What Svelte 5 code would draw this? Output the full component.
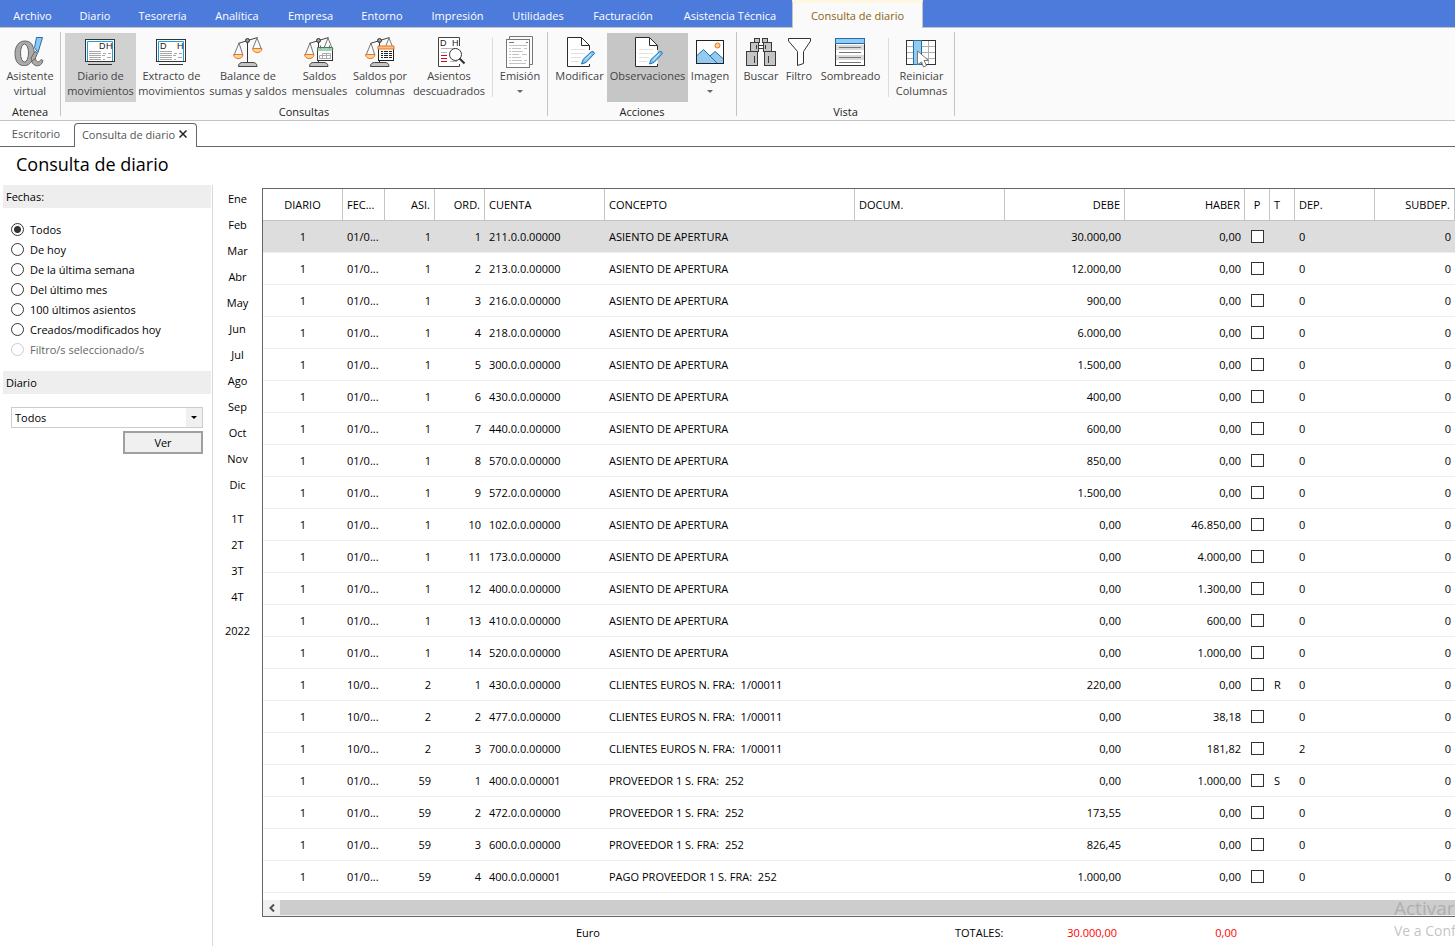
<script>
  const menu = [
    ['Archivo', 65], ['Diario', 60], ['Tesorería', 75], ['Analítica', 74], ['Empresa', 73],
    ['Entorno', 70], ['Impresión', 81], ['Utilidades', 80], ['Facturación', 90],
    ['Asistencia Técnica', 124], ['Consulta de diario', 131]
  ];

  const groups = [
    { name: 'Atenea', flush: true, items: [{ icon: 'alpha', lines: ['Asistente', 'virtual'], w: 60 }] },
    {
      name: 'Consultas',
      items: [
        { icon: 'diario', lines: ['Diario de', 'movimientos'], w: 71, state: 'checked' },
        { icon: 'extracto', lines: ['Extracto de', 'movimientos'], w: 71 },
        { icon: 'scales', lines: ['Balance de', 'sumas y saldos'], w: 82 },
        { icon: 'scalesCal', lines: ['Saldos', 'mensuales'], w: 61 },
        { icon: 'scalesCol', lines: ['Saldos por', 'columnas'], w: 60 },
        { icon: 'asientos', lines: ['Asientos', 'descuadrados'], w: 78 },
        { sep: true },
        { icon: 'emision', lines: ['Emisión'], w: 46, drop: true }
      ]
    },
    {
      name: 'Acciones',
      items: [
        { icon: 'edit', lines: ['Modificar'], w: 55 },
        { icon: 'edit', lines: ['Observaciones'], w: 81, state: 'hot' },
        { icon: 'imagen', lines: ['Imagen'], w: 44, drop: true }
      ]
    },
    {
      name: 'Vista',
      items: [
        { icon: 'buscar', lines: ['Buscar'], w: 40 },
        { icon: 'filtro', lines: ['Filtro'], w: 36 },
        { icon: 'sombreado', lines: ['Sombreado'], w: 67 },
        { sep: true },
        { icon: 'reiniciar', lines: ['Reiniciar', 'Columnas'], w: 57 }
      ]
    }
  ];

  const ranges = [
    'Todos', 'De hoy', 'De la última semana', 'Del último mes', '100 últimos asientos',
    'Creados/modificados hoy', 'Filtro/s seleccionado/s'
  ];
  let range = $state('Todos');

  const periods = [
    ['Ene', 'Feb', 'Mar', 'Abr', 'May', 'Jun', 'Jul', 'Ago', 'Sep', 'Oct', 'Nov', 'Dic'],
    ['1T', '2T', '3T', '4T'],
    ['2022']
  ];

  const columns = [
    ['DIARIO', 'c', 80], ['FEC...', 'l', 42], ['ASI.', 'r', 50], ['ORD.', 'r', 50], ['CUENTA', 'l', 120],
    ['CONCEPTO', 'l', 0], ['DOCUM.', 'l', 150], ['DEBE', 'r', 120], ['HABER', 'r', 120],
    ['P', 'c', 25], ['T', 'l', 25], ['DEP.', 'l', 80], ['SUBDEP.', 'r', 80]
  ];

  const A = 'ASIENTO DE APERTURA';
  const C = 'CLIENTES EUROS N. FRA:  1/00011';
  const P = 'PROVEEDOR 1 S. FRA:  252';
  const rows = [
    ['01/0...', 1, 1, '211.0.0.00000', A, '30.000,00', '0,00', '', 0],
    ['01/0...', 1, 2, '213.0.0.00000', A, '12.000,00', '0,00', '', 0],
    ['01/0...', 1, 3, '216.0.0.00000', A, '900,00', '0,00', '', 0],
    ['01/0...', 1, 4, '218.0.0.00000', A, '6.000,00', '0,00', '', 0],
    ['01/0...', 1, 5, '300.0.0.00000', A, '1.500,00', '0,00', '', 0],
    ['01/0...', 1, 6, '430.0.0.00000', A, '400,00', '0,00', '', 0],
    ['01/0...', 1, 7, '440.0.0.00000', A, '600,00', '0,00', '', 0],
    ['01/0...', 1, 8, '570.0.0.00000', A, '850,00', '0,00', '', 0],
    ['01/0...', 1, 9, '572.0.0.00000', A, '1.500,00', '0,00', '', 0],
    ['01/0...', 1, 10, '102.0.0.00000', A, '0,00', '46.850,00', '', 0],
    ['01/0...', 1, 11, '173.0.0.00000', A, '0,00', '4.000,00', '', 0],
    ['01/0...', 1, 12, '400.0.0.00000', A, '0,00', '1.300,00', '', 0],
    ['01/0...', 1, 13, '410.0.0.00000', A, '0,00', '600,00', '', 0],
    ['01/0...', 1, 14, '520.0.0.00000', A, '0,00', '1.000,00', '', 0],
    ['10/0...', 2, 1, '430.0.0.00000', C, '220,00', '0,00', 'R', 0],
    ['10/0...', 2, 2, '477.0.0.00000', C, '0,00', '38,18', '', 0],
    ['10/0...', 2, 3, '700.0.0.00000', C, '0,00', '181,82', '', 2],
    ['01/0...', 59, 1, '400.0.0.00001', P, '0,00', '1.000,00', 'S', 0],
    ['01/0...', 59, 2, '472.0.0.00000', P, '173,55', '0,00', '', 0],
    ['01/0...', 59, 3, '600.0.0.00000', P, '826,45', '0,00', '', 0],
    ['01/0...', 59, 4, '400.0.0.00001', 'PAGO PROVEEDOR 1 S. FRA:  252', '1.000,00', '0,00', '', 0]
  ];
</script>

{#snippet monitor(left)}
  <rect x="1.5" y="3.5" width="29" height="22" fill="#fff" stroke="#333" />
  <path d="M3.5 25V5.5H28.5V25" fill="none" stroke="#1e9fd6" />
  <path d="M4 28.5H28" stroke="#333" />
  <text x={left ? 5 : 15} y="13" class="glyph">D</text>
  <text x="22" y="13" class="glyph">H</text>
  <path d="M5 15.5H17M5 17.5H17M5 19.5H17M5 21.5H17M5 23.5H17M19 17.5H22M24 17.5H27M18 19.5H21M23 21.5H27M19 23.5H21" stroke="#a8a8a8" />
{/snippet}

{#snippet scales()}
  <path d="M15.5 6V26" stroke="#333" />
  <path d="M6 7.5L25.500 1.500" stroke="#444" fill="none" />
  <path d="M7 7L2.500 18M7 7L10.500 18M25 2L21 12M25 2L29 12" stroke="#777" fill="none" />
  <circle cx="15.500" cy="4.500" r="2" fill="#999" stroke="#333" />
  <path d="M1.500 18.500H11C10.500 24 2 24 1.500 18.500Z" fill="#ffd391" stroke="#e2762a" />
  <path d="M20.500 12.500H30C29.500 18 21 18 20.500 12.500Z" fill="#ffd391" stroke="#e2762a" />
  <path d="M6.500 30.500C6.500 27.500 8.500 26.500 10.500 26.500H21C23 26.500 25 27.500 25 30.500Z" fill="#c4c4c4" stroke="#444" />
{/snippet}

{#snippet icon(name)}
  <svg class="icon" viewBox="0 0 32 32" width="32" height="32" aria-hidden="true">
    {#if name === 'alpha'}
      <path d="M11 5C21 5 19.500 16 21.500 23C22.500 27 25.500 26.500 27 23.500L29 24.500C27.500 32 19 31 17.500 25C15 30 11.500 29.500 9.500 29.500C3.500 29.500 1 24 1 17.500C1 10 5 5 11 5Z" fill="#aaa" stroke="#666" />
      <path d="M21 15.500L23.500 17L21 23L18 25L17 22Z" fill="#aaa" stroke="#666" />
      <ellipse cx="10.500" cy="17" rx="4" ry="9" fill="#fafafa" stroke="#666" />
      <path d="M22.500 1.500H28.500L24 16.500L20.500 11.500Z" fill="#8cc8f0" stroke="#1f6fb0" />
    {:else if name === 'diario'}
      {@render monitor(false)}
    {:else if name === 'extracto'}
      {@render monitor(true)}
    {:else if name === 'scales'}
      {@render scales()}
    {:else if name === 'scalesCal'}
      {@render scales()}
      <rect x="14.500" y="12.500" width="15" height="12" fill="#fff" stroke="#333" />
      <path d="M14 11.500H30V15H14Z" fill="#9fd3b4" />
      <path d="M14.500 15V11.500H29.500V15M17.500 9.500V12.500M26.500 9.500V12.500" stroke="#4a7a5c" fill="none" />
      <path d="M19.500 17.500H27.500V22.500H16.500V19.500H27.500M19.500 17.500V22.500M23.500 17.500V22.500" stroke="#aaa" fill="none" />
    {:else if name === 'scalesCol'}
      {@render scales()}
      <rect x="14.500" y="10.500" width="15" height="14" fill="#fff" stroke="#222" />
      <path d="M14 10H30V13H14Z" fill="#ffc080" stroke="#e2762a" />
      <path d="M17 15.500H28M17 17.500H28M17 19.500H28M17 21.500H28" stroke="#222" stroke-dasharray="2 1 4 1 3 1" />
    {:else if name === 'asientos'}
      <path d="M26.500 10V1.500H5.500V30.500H26.500V28" fill="#fff" stroke="#444" />
      <text x="7" y="10" class="glyph">D</text>
      <text x="19" y="10" class="glyph">H</text>
      <path d="M8 12.500H24M8 16.500H14" stroke="#b4b4b4" />
      <path d="M8 19.500H14M8 22.500H14M8 25.500H14" stroke="#d9001b" stroke-width="1" />
      <path d="M17 25.500H24" stroke="#b4b4b4" />
      <circle cx="22.500" cy="18.500" r="6" fill="#fff" stroke="#333" />
      <path d="M26.500 22.500L31.500 27.500" stroke="#333" stroke-width="2" />
    {:else if name === 'emision'}
      <path d="M5.500 3V.5H28.500V28.500H26" fill="#fafafa" stroke="#777" />
      <rect x="2.500" y="3.500" width="23" height="28" fill="#fff" stroke="#777" />
      <path d="M5 6.500H10M22 6.500H24" stroke="#777" />
      <path d="M5 9.500H23M5 12.500H7M8 12.500H17M20 12.500H23M5 15.500H7M8 15.500H19M5 18.500H7M8 18.500H15M18 18.500H23M5 21.500H7M8 21.500H17M5 24.500H7M8 24.500H18M20 24.500H23M5 27.500H22" stroke="#c4c4c4" />
    {:else if name === 'edit'}
      <path d="M18 1.500H4.500V30.500H26.500V10Z" fill="#fff" />
      <path d="M26.500 14V10L18 1.500H4.500V30.500H26.500V28" fill="none" stroke="#2b2b2b" />
      <path d="M18.500 1.500V9.500H26.500Z" fill="#fff" stroke="#2b2b2b" />
      <path d="M8 13.500H22M8 17.500H22M8 21.500H18M8 25.500H16" stroke="#e2e2e2" />
      <path d="M18.500 28L20 23.500L28.500 15.500Q31 15 31.500 17.500L23 26.500Z" fill="#7cc0ee" stroke="#1a74b8" />
      <path d="M22 24.500L28 18" stroke="#e6f4ff" />
    {:else if name === 'imagen'}
      <rect x="2.500" y="4.500" width="27" height="23" fill="#fff" />
      <path d="M3 19.500L9.500 13.500L16 20L21 15.500L29 22.500V27H3Z" fill="#94c9f0" />
      <path d="M3 19.500L9.500 13.500L23 27M16 20L21 15.500L29 22.500" fill="none" stroke="#1f6fb0" />
      <circle cx="23.500" cy="9.500" r="2.500" fill="#ffd391" stroke="#e2762a" />
      <rect x="2.500" y="4.500" width="27" height="23" fill="none" stroke="#222" />
    {:else if name === 'buscar'}
      <g fill="#c4c4c4" stroke="#3a3a3a">
        <path d="M12 9.500H20V12.500H12Z" fill="#fff" />
        <rect x="9.500" y="2.500" width="5" height="4" />
        <rect x="17.500" y="2.500" width="5" height="4" />
        <rect x="5.500" y="6.500" width="8" height="9" />
        <rect x="18.500" y="6.500" width="8" height="9" />
        <rect x="1.500" y="15.500" width="11" height="14" />
        <rect x="19.500" y="15.500" width="11" height="14" />
        <path d="M9.500 20V27M23.500 20V27M11.500 9V13M20.500 9V13" />
      </g>
    {:else if name === 'filtro'}
      <path d="M5.500 2.500H27.500V5L20.500 15.500V27.500L14.500 29.500V15.500L5.500 5Z" fill="#fff" stroke="#333" />
    {:else if name === 'sombreado'}
      <rect x="1.500" y="2.500" width="29" height="27" fill="#fff" stroke="#333" />
      <path d="M2 9H30V14H2ZM2 19H30V24H2Z" fill="#dadada" />
      <rect x="1.500" y="2.500" width="29" height="5" fill="#94c9f0" stroke="#1f6fb0" />
      <path d="M5 11.500H27M5 16.500H27M5 21.500H27M5 26.500H27" stroke="#777" />
    {:else if name === 'reiniciar'}
      <rect x="1.500" y="4.500" width="29" height="24" fill="#fff" stroke="#333" />
      <path d="M2 10.500H30M2 16.500H30M2 22.500H30M23.500 5V28" stroke="#b0b0b0" />
      <rect x="8.500" y="4.500" width="8" height="24" fill="#94c9f0" stroke="#1f6fb0" />
      <path d="M12.500 15L23.500 24.500H19L21.500 29.500L18.500 31L16.500 26L12.500 28.500Z" fill="#fff" stroke="#777" />
    {/if}
  </svg>
{/snippet}

<div class="app">
  <nav class="menu">
    {#each menu as [label, w], i}
      <button class:active={i === menu.length - 1} style="width: {w}px">{label}</button>
    {/each}
  </nav>

  <header class="ribbon">
    {#each groups as g}
      <section class="group" class:flush={g.flush}>
        <div class="tools">
          {#each g.items as it}
            {#if it.sep}
              <span class="sep"></span>
            {:else}
              <button class="tool {it.state ?? ''}" style="width: {it.w}px">
                {@render icon(it.icon)}
                {#each it.lines as line}<span>{line}</span>{/each}
                {#if it.drop}<i class="caret"></i>{/if}
              </button>
            {/if}
          {/each}
        </div>
        <div class="caption">{g.name}</div>
      </section>
    {/each}
  </header>

  <div class="tabs">
    <button class="tab">Escritorio</button>
    <div class="tab current">
      <span>Consulta de diario</span>
      <button class="close" aria-label="Cerrar">
        <svg viewBox="0 0 8 8" width="8" height="8"><path d="M.5 .5L7.500 7.500M7.500 .5L.5 7.500" stroke="#222" stroke-width="1.500" /></svg>
      </button>
    </div>
  </div>

  <h1>Consulta de diario</h1>

  <div class="body">
    <aside>
      <h2>Fechas:</h2>
      <div class="radios">
        {#each ranges as r, i}
          <label class:off={i === 6}>
            <input type="radio" name="range" value={r} bind:group={range} disabled={i === 6} />{r}
          </label>
        {/each}
      </div>
      <h2>Diario</h2>
      <div class="pick">
        <div class="combo">
          <select aria-label="Diario"><option>Todos</option></select>
          <span class="drop"><i class="caret dark"></i></span>
        </div>
        <button class="go">Ver</button>
      </div>
    </aside>

    <nav class="periods">
      {#each periods as block}
        <div>
          {#each block as p}<button>{p}</button>{/each}
        </div>
      {/each}
    </nav>

    <main>
      <div class="grid">
        <table>
          <colgroup>
            {#each columns as [, , w]}<col style={w ? `width: ${w}px` : ''} />{/each}
          </colgroup>
          <thead>
            <tr>{#each columns as [name, align]}<th class={align}>{name}</th>{/each}</tr>
          </thead>
          <tbody>
            {#each rows as [date, asi, ord, acc, text, debe, haber, t, dep], i}
              <tr class:selected={i === 0}>
                <td class="c">1</td>
                <td>{date}</td>
                <td class="r">{asi}</td>
                <td class="r">{ord}</td>
                <td>{acc}</td>
                <td>{text}</td>
                <td></td>
                <td class="r">{debe}</td>
                <td class="r">{haber}</td>
                <td class="check"><input type="checkbox" aria-label="P" /></td>
                <td>{t}</td>
                <td>{dep}</td>
                <td class="r">0</td>
              </tr>
            {/each}
          </tbody>
        </table>
        <div class="scroll">
          <button aria-label="Desplazar a la izquierda">
            <svg viewBox="0 0 8 8" width="8" height="8"><path d="M6 .5L2.500 4L6 7.500" fill="none" stroke="#505050" stroke-width="2" /></svg>
          </button>
          <div class="thumb"></div>
        </div>
      </div>
      <footer>
        <span class="currency">Euro</span>
        <span>TOTALES:</span>
        <span class="sum">30.000,00</span>
        <span class="sum">0,00</span>
      </footer>
    </main>
  </div>

  <div class="watermark"><p>Activar</p><p class="small">Ve a Conf</p></div>
</div>

<style>
  :global(body) { background: #fff; }
  .app {
    position: relative;
    display: flex;
    flex-direction: column;
    min-height: 100vh;
    overflow: hidden;
    font: 11px/15px 'Open Sans', 'Noto Sans', sans-serif;
    color: #000;
  }
  .app * { box-sizing: border-box; }
  button { font: inherit; color: inherit; padding: 0; border: 0; background: none; white-space: nowrap; }

  .menu { display: flex; height: 28px; background: #4d7bdb; border-bottom: 1px solid #c4c4c4; }
  .menu button { flex: none; color: #fff; padding-top: 3px; }
  .menu .active {
    height: 28px;
    padding-top: 0;
    color: #8a6410;
    background: #fafafa;
    border: solid #c4c4c4;
    border-width: 1px 1px 0;
    border-top: 3px solid #fff8e0;
  }

  .ribbon { display: flex; height: 93px; padding-top: 4px; background: #fafafa; border-bottom: 1px solid #c4c4c4; }
  .group { height: 84px; padding: 1px 4px 0; border-right: 1px solid #c4c4c4; }
  .group.flush { padding: 1px 0 0; }
  .tools { display: flex; height: 69px; }
  .tool { display: flex; flex-direction: column; align-items: center; padding-top: 3px; color: #444; }
  .tool .icon { flex: none; margin-right: 1px; }
  .tool.checked { background: #d1d1d1; }
  .tool.hot { background: #c6c6c6; }
  .glyph { font: 9px 'Liberation Sans', sans-serif; fill: #222; }
  .caret { border: 3px solid transparent; border-top-color: #666; border-bottom: 0; margin-top: 7px; }
  .caret.dark { border-top-color: #000; margin: 0; }
  .sep { width: 1px; height: 59px; margin: 5px 4px 0; background: #dcdcdc; }
  .caption { margin-top: 2px; text-align: center; color: #222; }

  .tabs { display: flex; align-items: flex-end; height: 26px; border-bottom: 1px solid #666; }
  .tab { height: 24px; width: 74px; padding: 0 2px 2px 0; color: #555; }
  .tab.current {
    display: flex;
    align-items: center;
    justify-content: center;
    gap: 4px;
    width: 123px;
    padding: 0 2px 3px 0;
    margin-bottom: -1px;
    background: #fff;
    border: 1px solid #666;
    border-bottom: 0;
    border-radius: 4px 4px 0 0;
  }
  .close { display: flex; }

  h1 { margin: 0; padding: 5px 16px 8px; font-size: 18px; line-height: 25px; font-weight: 400; }

  .body { display: flex; flex: 1; }
  aside { flex: none; width: 213px; padding: 0 1px 0 3px; border-right: 1px solid #d8d8d8; }
  h2 { margin: 0; padding: 4px 3px; font-size: 11px; line-height: 15px; font-weight: 400; background: #eee; }
  .radios { padding: 11px 8px 12px; }
  .radios label { display: flex; align-items: center; gap: 6px; height: 20px; }
  .radios .off { color: #666; }
  input { appearance: none; flex: none; width: 13px; height: 13px; margin: 0; background: #fff; border: 1px solid #333; }
  input[type='radio'] { border-radius: 50%; }
  input[type='radio']:checked { background: radial-gradient(circle, #333 3px, #fff 4px); }
  input:disabled { border-color: #ccc; }
  input[type='checkbox'] { display: block; margin: 0 auto; }

  .pick { display: flex; flex-direction: column; align-items: flex-end; gap: 3px; padding: 13px 8px; }
  .combo { display: grid; width: 100%; height: 21px; border: 1px solid #ccc; }
  .combo > * { grid-area: 1 / 1; }
  select { appearance: none; font: inherit; color: #000; background: #fff; border: 0; padding: 0 3px; width: 100%; }
  .drop { display: flex; align-items: center; justify-content: center; justify-self: end; width: 16px; background: #f0f0f0; pointer-events: none; }
  .go { width: 80px; height: 23px; background: #f0f0f0; border: 2px solid #a0a0a0; }

  .periods { flex: none; display: flex; flex-direction: column; gap: 8px; width: 49px; }
  .periods button { display: block; width: 100%; height: 26px; }

  main { flex: 1; min-width: 0; padding-top: 3px; }
  .grid { border: 1px solid #666; border-right: 0; overflow: hidden; }
  table { width: 100%; min-width: 1192px; table-layout: fixed; border-collapse: separate; border-spacing: 0; }
  th, td { height: 32px; padding: 0 4px; text-align: left; white-space: pre; font-weight: 400; border-bottom: 1px solid #eee; }
  th { border-right: 1px solid #c4c4c4; border-bottom-color: #c4c4c4; }
  .c { text-align: center; }
  .r { text-align: right; }
  .check { padding-bottom: 1px; }
  .selected td { background: #ddd; }
  .scroll { display: flex; height: 16px; margin-top: 7px; background: #f0f0f0; }
  .scroll button { width: 17px; display: flex; align-items: center; justify-content: center; }
  .thumb { flex: 1; height: 15px; background: #cdcdcd; }

  footer { display: grid; grid-template-columns: 1fr 60px 102px 120px 218px; padding-top: 8px; }
  .currency { padding-left: 314px; }
  .sum { text-align: right; color: #f00; }

  .watermark { position: absolute; left: calc(100% - 61px); bottom: 5px; color: #9a9a9a99; white-space: nowrap; pointer-events: none; }
  .watermark p { margin: 0; font-size: 19px; line-height: 25px; }
  .watermark .small { font-size: 14px; line-height: 20px; }
</style>
